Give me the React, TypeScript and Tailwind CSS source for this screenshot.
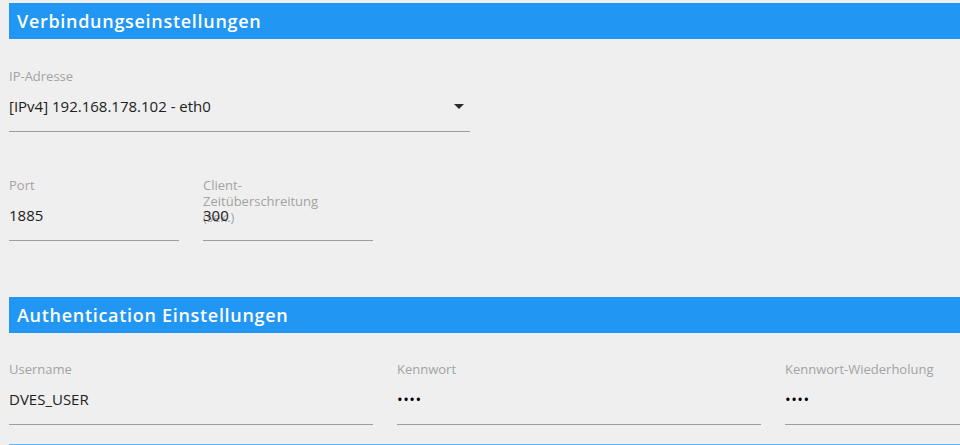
import React from "react";

const FONT = "font-['Open_Sans','Noto_Sans',sans-serif]";

function SectionHeader({ title }: { title: string }) {
	return (
		<div className="flex h-[36px] items-center bg-[#2196f3] pl-[8px] text-[18px] font-semibold tracking-[0.7px] text-white">
			{title}
		</div>
	);
}

function Field({
	label,
	value,
	width,
	select,
	password,
}: {
	label: React.ReactNode;
	value: string;
	width: string;
	select?: boolean;
	password?: boolean;
}) {
	return (
		<div className={`flex flex-col ${width}`}>
			<div className="h-[16px] overflow-visible text-[13px] leading-[16px] text-[#a3a3a3]">
				{label}
			</div>
			<div className="mt-[13px] flex h-[35px] items-start justify-between border-b border-[#9e9e9e]">
				<span
					className={`text-[15px] leading-[18px] ${
						password ? "tracking-[0.5px] text-black" : "text-[#212121]"
					}`}
				>
					{value}
				</span>
				{select && (
					<svg
						width="10"
						height="5"
						viewBox="0 0 10 5"
						className="mr-[6px] mt-[7px]"
					>
						<path d="M0 0h10L5 5z" fill="#2b2b2b" />
					</svg>
				)}
			</div>
		</div>
	);
}

export default function App() {
	return (
		<div
			className={`h-[445px] w-full overflow-hidden bg-[#efefef] ${FONT}`}
		>
			<div className="w-[1160px] pl-[9px] pt-[3px]">
				<SectionHeader title="Verbindungseinstellungen" />

				<div className="pt-[29px]">
					<Field
						label="IP-Adresse"
						value="[IPv4] 192.168.178.102 - eth0"
						width="w-[461px]"
						select
					/>
				</div>

				<div className="flex gap-[24px] pt-[45px]">
					<Field label="Port" value="1885" width="w-[170px]" />
					<Field
						label={
							<>
								Client-
								<br />
								Zeitüberschreitung
								<br />
								(sek.)
							</>
						}
						value="300"
						width="w-[170px]"
					/>
				</div>

				<div className="pt-[56px]">
					<SectionHeader title="Authentication Einstellungen" />
				</div>

				<div className="flex gap-[24px] pt-[28px]">
					<Field label="Username" value="DVES_USER" width="w-[364px]" />
					<Field
						label="Kennwort"
						value="••••"
						width="w-[364px]"
						password
					/>
					<Field
						label="Kennwort-Wiederholung"
						value="••••"
						width="w-[364px]"
						password
					/>
				</div>

				<div className="mt-[19px] h-[1px] bg-[#64b5f6]" />
			</div>
		</div>
	);
}
